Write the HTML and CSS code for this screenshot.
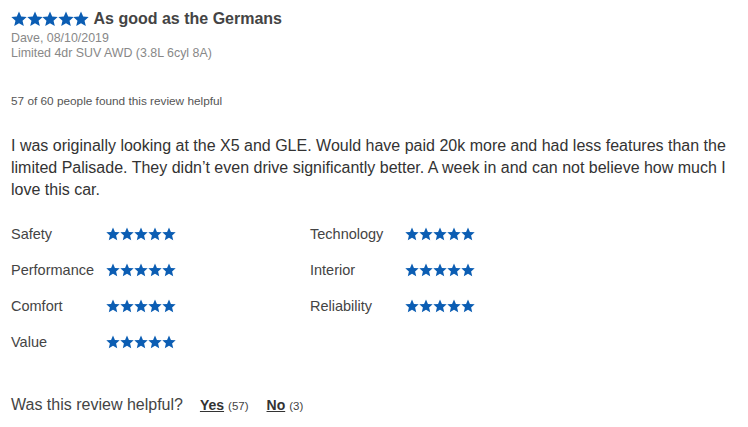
FILE: index.html
```html
<!DOCTYPE html>
<html>
<head>
<meta charset="utf-8">
<link rel="stylesheet" href="styles.css">
</head>
<body>
<svg width="0" height="0" class="defs">
  <defs>
    <symbol id="star" viewBox="0 0 24 24"><path d="M12 0.8l3.3 7.6 8.2 0.7-6.2 5.4 1.9 8.1L12 18.3l-7.2 4.3 1.9-8.1L0.5 9.1l8.2-0.7z"/></symbol>
  </defs>
</svg>
<div class="review">
  <div class="head">
    <span class="stars big">
      <svg><use href="#star"/></svg><svg><use href="#star"/></svg><svg><use href="#star"/></svg><svg><use href="#star"/></svg><svg><use href="#star"/></svg>
    </span>
    <h1 class="title">As good as the Germans</h1>
  </div>
  <div class="meta">Dave, 08/10/2019</div>
  <div class="meta">Limited 4dr SUV AWD (3.8L 6cyl 8A)</div>
  <div class="helpful-count">57 of 60 people found this review helpful</div>
  <p class="body">I was originally looking at the X5 and GLE. Would have paid 20k more and had less features than the limited Palisade. They didn’t even drive significantly better. A week in and can not believe how much I love this car.</p>
  <div class="ratings">
    <div class="rating"><span class="label">Safety</span><span class="stars small"><svg><use href="#star"/></svg><svg><use href="#star"/></svg><svg><use href="#star"/></svg><svg><use href="#star"/></svg><svg><use href="#star"/></svg></span></div>
    <div class="rating"><span class="label">Technology</span><span class="stars small"><svg><use href="#star"/></svg><svg><use href="#star"/></svg><svg><use href="#star"/></svg><svg><use href="#star"/></svg><svg><use href="#star"/></svg></span></div>
    <div class="rating"><span class="label">Performance</span><span class="stars small"><svg><use href="#star"/></svg><svg><use href="#star"/></svg><svg><use href="#star"/></svg><svg><use href="#star"/></svg><svg><use href="#star"/></svg></span></div>
    <div class="rating"><span class="label">Interior</span><span class="stars small"><svg><use href="#star"/></svg><svg><use href="#star"/></svg><svg><use href="#star"/></svg><svg><use href="#star"/></svg><svg><use href="#star"/></svg></span></div>
    <div class="rating"><span class="label">Comfort</span><span class="stars small"><svg><use href="#star"/></svg><svg><use href="#star"/></svg><svg><use href="#star"/></svg><svg><use href="#star"/></svg><svg><use href="#star"/></svg></span></div>
    <div class="rating"><span class="label">Reliability</span><span class="stars small"><svg><use href="#star"/></svg><svg><use href="#star"/></svg><svg><use href="#star"/></svg><svg><use href="#star"/></svg><svg><use href="#star"/></svg></span></div>
    <div class="rating"><span class="label">Value</span><span class="stars small"><svg><use href="#star"/></svg><svg><use href="#star"/></svg><svg><use href="#star"/></svg><svg><use href="#star"/></svg><svg><use href="#star"/></svg></span></div>
  </div>
  <div class="vote">
    <span class="q">Was this review helpful?</span>
    <a class="btn" href="#"><b>Yes</b></a><span class="n">(57)</span>
    <a class="btn" href="#"><b>No</b></a><span class="n">(3)</span>
  </div>
</div>
</body>
</html>
```
FILE: styles.css
```css
html, body { margin: 0; padding: 0; background: #fff; }
body { font-family: "Liberation Sans", Arial, sans-serif; color: #333; }
.defs { position: absolute; width: 0; height: 0; }
.review { padding: 9px 11px 0 11px; }
.head { display: flex; align-items: center; height: 20px; margin-bottom: 2px; }
.stars { display: inline-flex; fill: #0b5db3; }
.stars.big svg { width: 16px; height: 16px; margin-right: -0.5px; }
.stars.small svg { width: 14px; height: 14px; }
.title { margin: 0 0 0 5px; font-size: 16px; font-weight: bold; color: #444; line-height: 20px; }
.meta { font-size: 12.4px; color: #888; line-height: 15px; }
.helpful-count { font-size: 11.8px; color: #555; margin-top: 33px; line-height: 14px; }
.body { margin: 27px 0 0 0; font-size: 16px; line-height: 22px; color: #333; }
.ratings { display: grid; grid-template-columns: 299px 200px; margin-top: 15px; }
.rating { display: flex; align-items: center; height: 36px; }
.label { width: 95px; font-size: 14.5px; color: #444; }
.vote { display: flex; align-items: baseline; margin-top: 36px; line-height: 18px; }
.q { font-size: 16px; color: #444; margin-right: 17px; }
.btn { color: #333; font-size: 14px; text-decoration: underline; }
.n { font-size: 11.5px; color: #444; margin-left: 4px; margin-right: 18px; }
```
